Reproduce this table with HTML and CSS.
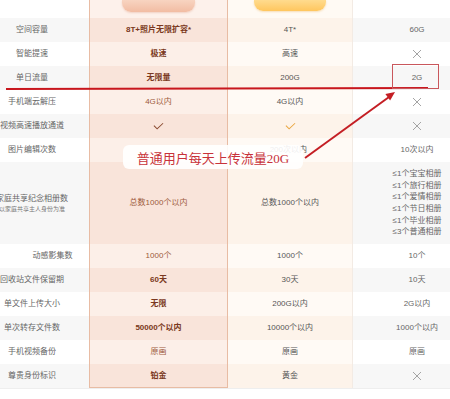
FILE: index.html
```html
<!DOCTYPE html>
<html lang="zh-CN">
<head>
<meta charset="utf-8">
<title>会员权益对比</title>
<link rel="stylesheet" href="styles.css">
</head>
<body>
<div class="page">
  <div class="table">
    <div class="row head">
      <div class="cell label"></div>
      <div class="cell pro"><span class="pill pill-pro"></span></div>
      <div class="cell gold"><span class="pill pill-gold"></span></div>
      <div class="cell free"></div>
    </div>
    <div class="row alt">
      <div class="cell label"><span>空间容量</span></div>
      <div class="cell pro strong">8T+照片无限扩容*</div>
      <div class="cell gold">4T*</div>
      <div class="cell free">60G</div>
    </div>
    <div class="row">
      <div class="cell label"><span>智能提速</span></div>
      <div class="cell pro strong">极速</div>
      <div class="cell gold">高速</div>
      <div class="cell free"><svg class="ico" viewBox="0 0 10 10"><path d="M1 1L9 9M9 1L1 9"/></svg></div>
    </div>
    <div class="row alt">
      <div class="cell label"><span>单日流量</span></div>
      <div class="cell pro strong">无限量</div>
      <div class="cell gold">200G</div>
      <div class="cell free">2G</div>
    </div>
    <div class="row">
      <div class="cell label"><span>手机端云解压</span></div>
      <div class="cell pro">4G以内</div>
      <div class="cell gold">4G以内</div>
      <div class="cell free"><svg class="ico" viewBox="0 0 10 10"><path d="M1 1L9 9M9 1L1 9"/></svg></div>
    </div>
    <div class="row alt">
      <div class="cell label"><span>视频高速播放通道</span></div>
      <div class="cell pro"><svg class="chk chk-pro" viewBox="0 0 12 8"><path d="M1 3.5L4.5 7L11 1"/></svg></div>
      <div class="cell gold"><svg class="chk chk-gold" viewBox="0 0 12 8"><path d="M1 3.5L4.5 7L11 1"/></svg></div>
      <div class="cell free"><svg class="ico" viewBox="0 0 10 10"><path d="M1 1L9 9M9 1L1 9"/></svg></div>
    </div>
    <div class="row">
      <div class="cell label"><span>图片编辑次数</span></div>
      <div class="cell pro strong"></div>
      <div class="cell gold under">200次以内</div>
      <div class="cell free">10次以内</div>
    </div>
    <div class="row alt big">
      <div class="cell label stack"><span>家庭共享纪念相册数</span><small>以家庭共享主人身份为准</small></div>
      <div class="cell pro">总数1000个以内</div>
      <div class="cell gold">总数1000个以内</div>
      <div class="cell free list">
        <span>≤1个宝宝相册</span>
        <span>≤1个旅行相册</span>
        <span>≤1个爱情相册</span>
        <span>≤1个节日相册</span>
        <span>≤1个毕业相册</span>
        <span>≤3个普通相册</span>
      </div>
    </div>
    <div class="row">
      <div class="cell label shifted"><span>动感影集数</span></div>
      <div class="cell pro">1000个</div>
      <div class="cell gold">1000个</div>
      <div class="cell free">10个</div>
    </div>
    <div class="row alt">
      <div class="cell label"><span>回收站文件保留期</span></div>
      <div class="cell pro strong">60天</div>
      <div class="cell gold">30天</div>
      <div class="cell free">10天</div>
    </div>
    <div class="row">
      <div class="cell label"><span>单文件上传大小</span></div>
      <div class="cell pro strong">无限</div>
      <div class="cell gold">200G以内</div>
      <div class="cell free">2G以内</div>
    </div>
    <div class="row alt">
      <div class="cell label"><span>单次转存文件数</span></div>
      <div class="cell pro strong">50000个以内</div>
      <div class="cell gold">10000个以内</div>
      <div class="cell free">1000个以内</div>
    </div>
    <div class="row">
      <div class="cell label"><span>手机视频备份</span></div>
      <div class="cell pro">原画</div>
      <div class="cell gold">原画</div>
      <div class="cell free">原画</div>
    </div>
    <div class="row alt last">
      <div class="cell label"><span>尊贵身份标识</span></div>
      <div class="cell pro strong">铂金</div>
      <div class="cell gold">黄金</div>
      <div class="cell free"><svg class="ico" viewBox="0 0 10 10"><path d="M1 1L9 9M9 1L1 9"/></svg></div>
    </div>
  </div>

  <svg class="marks" viewBox="0 0 450 399" width="450" height="399">
    <line x1="6" y1="89" x2="428" y2="88" stroke="#c8161d" stroke-width="2"/>
    <rect x="392.5" y="64.5" width="46" height="24" fill="none" stroke="#c9575c" stroke-width="1"/>
    <line x1="305" y1="158" x2="389" y2="97" stroke="#c41e24" stroke-width="2"/>
    <polygon points="395,92 390.1,100.5 385.4,94.1" fill="#c41e24"/>
  </svg>
  <div class="callout">普通用户每天上传流量20G</div>
</div>
</body>
</html>
```

FILE: styles.css
```css
html, body {
  margin: 0;
  padding: 0;
  background: #ffffff;
}

.page {
  position: relative;
  width: 450px;
  height: 399px;
  overflow: hidden;
  font-family: "Liberation Sans", "Noto Sans CJK SC", sans-serif;
  font-size: 8px;
  color: #666666;
}

.table {
  width: 481px;
  display: flex;
  flex-direction: column;
  border-bottom: 1px solid #eeeeee;
}

.row {
  display: grid;
  grid-template-columns: 89px 139px 125px 128px;
  height: 24px;
}

.row.head { height: 18px; }
.row.big { height: 82px; }

.cell {
  box-sizing: border-box;
  display: flex;
  align-items: center;
  justify-content: center;
  white-space: nowrap;
  overflow: hidden;
  line-height: 1;
}

.label {
  padding-right: 25px;
  color: #666666;
  background: #ffffff;
}
.label.shifted { padding-right: 0; padding-left: 16px; }

.label.stack {
  flex-direction: column;
  gap: 3px;
}
.label small {
  font-size: 6px;
  color: #777777;
}

.pro {
  border-left: 1px solid #e8bca4;
  border-right: 1px solid #e8bca4;
  background: #fcefe8;
  color: #9c5a3c;
}
.pro.strong {
  color: #7a3820;
  font-weight: bold;
}

.gold {
  background: #fffaf5;
  color: #555555;
  border-right: 1px solid #f3ebe4;
}
.gold.under {
  justify-content: flex-end;
  padding-right: 45px;
}

.free {
  background: #ffffff;
  color: #666666;
}

.row.alt .label,
.row.alt .free { background: #f7f7f7; }
.row.alt .pro { background: #f9e4da; }
.row.alt .gold { background: #fdf3ea; }

.row.head .label,
.row.head .free { background: #ffffff; }
.row.head .pro { background: #fdf1eb; align-items: flex-start; }
.row.head .gold { background: #fffaf4; align-items: flex-start; }

.row.last .pro {
  border-bottom: 1px solid #e8bca4;
}

.pill {
  display: block;
  width: 73px;
  height: 12px;
  border-radius: 0 0 9px 9px;
}
.pill-pro {
  background: linear-gradient(180deg, #f8d4c1, #f2bca3);
  box-shadow: 0 1px 2px rgba(220, 150, 120, 0.35);
}
.pill-gold {
  width: 72px;
  height: 11px;
  background: linear-gradient(180deg, #ffdb8e, #ffc65e);
  box-shadow: 0 1px 2px rgba(230, 170, 70, 0.35);
}

.ico {
  width: 10px;
  height: 10px;
  fill: none;
  stroke: #9a9a9a;
  stroke-width: 0.9;
}

.chk {
  width: 11px;
  height: 8px;
  fill: none;
  stroke-width: 1.1;
}
.chk-pro { stroke: #8a4a30; }
.chk-gold { stroke: #eaa640; }

.list {
  flex-direction: column;
  line-height: 11.6px;
}

.marks {
  position: absolute;
  top: 0;
  left: 0;
  pointer-events: none;
}

.callout {
  position: absolute;
  left: 123px;
  top: 145px;
  width: 180px;
  height: 24px;
  box-sizing: border-box;
  border-radius: 6px;
  background: rgba(255, 255, 255, 0.9);
  display: flex;
  align-items: center;
  justify-content: center;
  font-family: "Liberation Serif", "Noto Sans CJK SC", serif;
  font-size: 13px;
  color: #c8323a;
  white-space: nowrap;
}
```
